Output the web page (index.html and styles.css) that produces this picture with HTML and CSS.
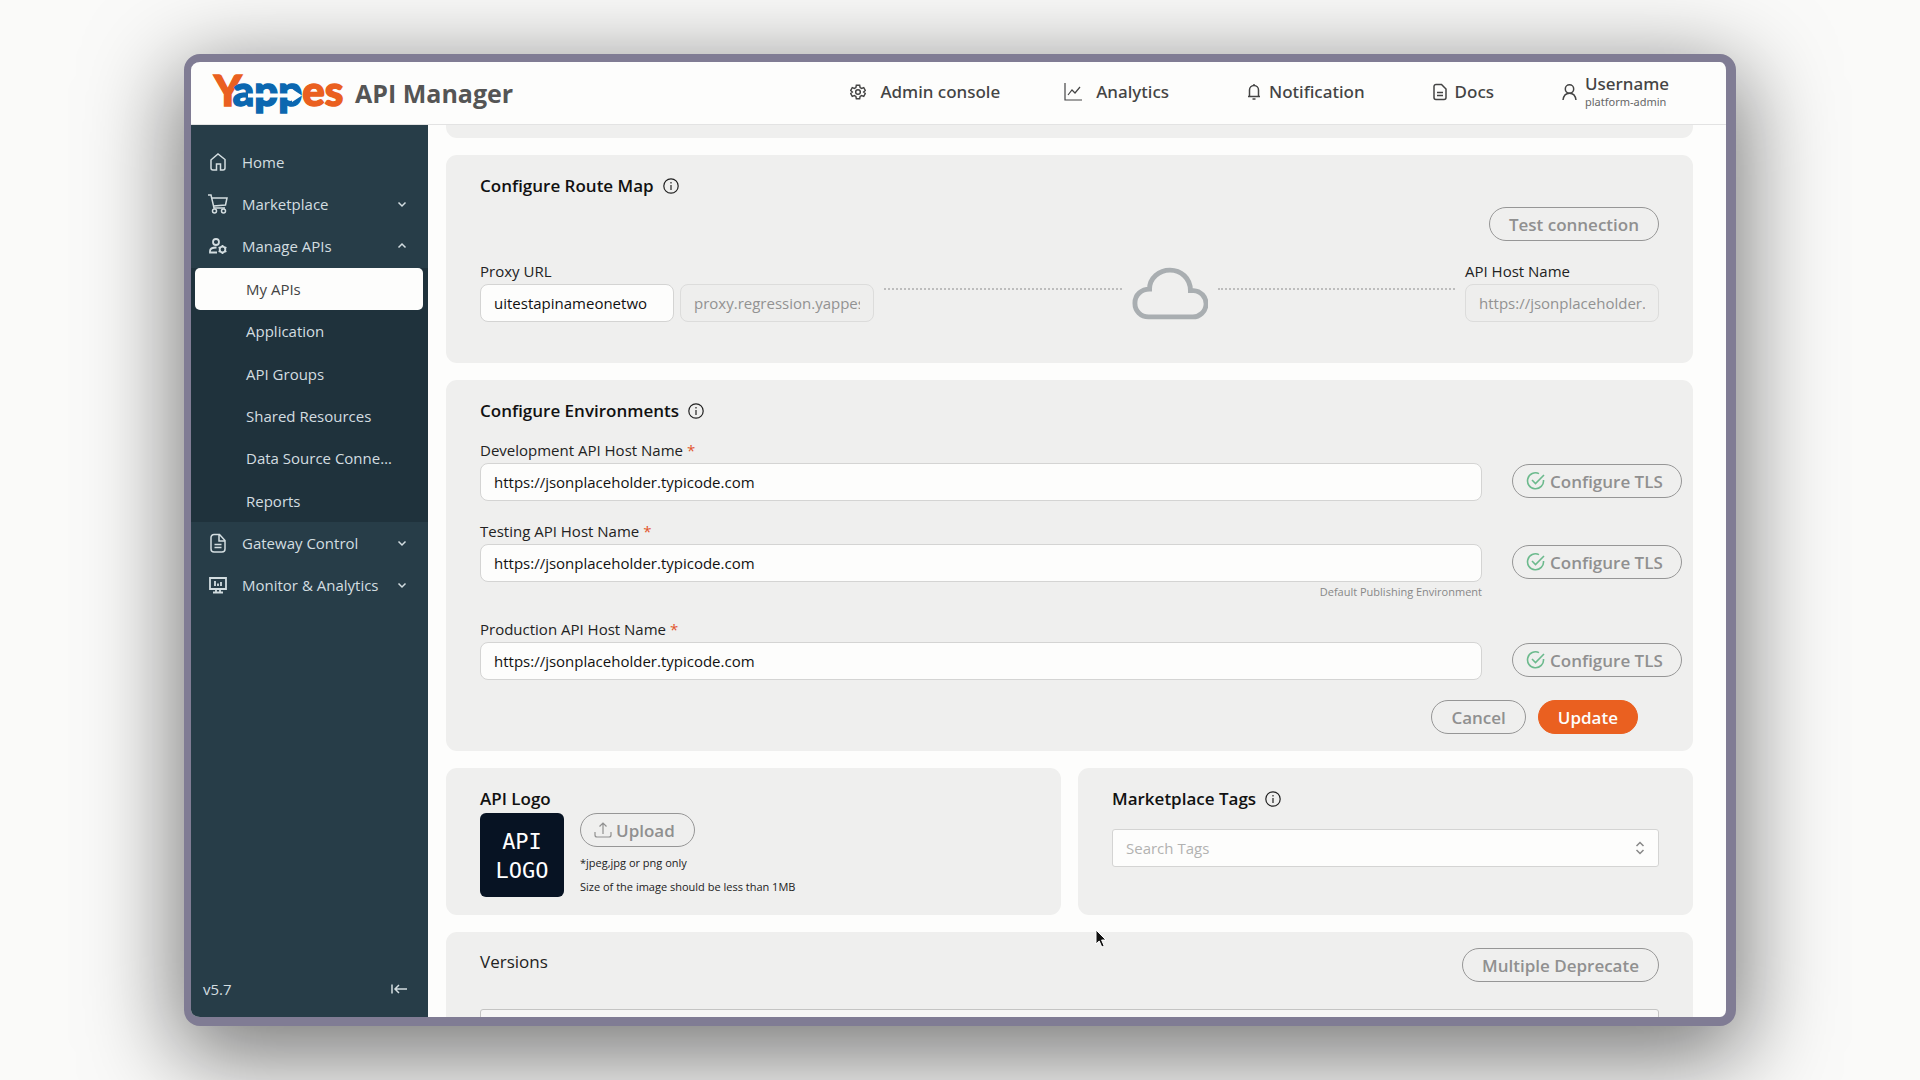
FILE: index.html
```html
<!DOCTYPE html>
<html lang="en">
<head>
    <meta charset="UTF-8">
    <meta name="viewport" content="width=device-width, initial-scale=1.0">
    <title>Yappes API Manager</title>
    <link rel="stylesheet" href="styles.css">
</head>
<body>
    <div class="window">
        <header class="topbar">
            <a class="brand" href="#">
                <svg class="brand-logo" width="136" height="60" viewBox="0 0 136 60" role="img" aria-label="Yappes">
                    <text x="2" y="43"><tspan class="logo-orange">Y</tspan><tspan class="logo-blue" dx="-4">app</tspan><tspan class="logo-orange">es</tspan></text>
                    <path d="M36 30.500h44v-4.500l10 6.500-10 6.500v-4.500H36z" fill="#fdfdfc"/>
                </svg>
                <span class="brand-name">API Manager</span>
            </a>
            <nav class="topnav">
                <a class="topnav-link spaced admin" href="#">
                    <svg width="16" height="16" viewBox="0 0 24 24" class="icon gear"><path d="M9.500 2h5l.7 3.300 2.200 1.300 3.200-1.100 2.400 4.200-2.500 2.300 2.500 2.300-2.400 4.200-3.200-1.100-2.200 1.300-.7 3.300h-5l-.7-3.300-2.200-1.300-3.200 1.100L1 14.300 3.500 12 1 9.700l2.400-4.200 3.200 1.100 2.200-1.300z"/><circle cx="12" cy="12" r="3.500"/></svg>
                    Admin console
                </a>
                <a class="topnav-link spaced" href="#">
                    <svg width="18" height="18" viewBox="0 0 18 18" class="icon thin"><path d="M1 0v17h17M4 12l4-5 3 3 5-6"/></svg>
                    Analytics
                </a>
                <a class="topnav-link bell" href="#">
                    <svg width="14" height="18" viewBox="0 0 14 18" class="icon"><path d="M1 13.500h12M2.500 13.500V7a4.500 4.500 0 0 1 9 0v6.500M5.500 16h3M7 2.500V1"/></svg>
                    Notification
                </a>
                <a class="topnav-link" href="#">
                    <svg width="14" height="18" viewBox="0 0 14 18" class="icon"><path d="M3 1.500h5.500L13 6v8.500a2 2 0 0 1-2 2H3a2 2 0 0 1-2-2v-11a2 2 0 0 1 2-2zM4 9.500h6M4 12.500h6"/></svg>
                    Docs
                </a>
                <a class="topnav-link user" href="#">
                    <svg width="15" height="18" viewBox="0 0 15 18" class="icon"><circle cx="7.500" cy="6" r="4.200"/><path d="M1 17c.5-4 3-6.800 6.500-6.800S13.500 13 14 17"/></svg>
                    <span class="user-text">
                        <span>Username</span>
                        <small>platform-admin</small>
                    </span>
                </a>
            </nav>
        </header>

        <div class="body">
            <aside class="sidebar">
                <nav class="menu">
                    <a class="menu-item" href="#">
                        <svg width="20" height="20" viewBox="0 0 20 20" class="icon"><path d="M3.500 7.500 10 2l7 5.500V16a2 2 0 0 1-2 2h-2.500v-6h-4v6H5a2 2 0 0 1-2-2V8z"/></svg>
                        Home
                    </a>
                    <a class="menu-item" href="#">
                        <svg width="20" height="20" viewBox="0 0 20 20" class="icon"><path d="M0 1h3l3 13h11M4 4h15l-1.500 7L5.500 12"/><circle cx="6.500" cy="17" r="2"/><circle cx="15.500" cy="17" r="2"/></svg>
                        Marketplace
                        <svg width="10" height="10" viewBox="0 0 10 10" class="icon chevron"><path d="m1.500 3.500 3.500 3.500 3.500-3.500"/></svg>
                    </a>
                    <a class="menu-item" href="#">
                        <svg width="20" height="20" viewBox="0 0 20 20" class="icon bold"><circle cx="8" cy="6" r="3"/><path d="M9 16.500H2v-1.500c0-2.200 3-3.500 6.500-3.500"/><circle cx="14.500" cy="13.500" r="2.800"/><path d="M14.500 9v1.700M14.500 16.300V18M10.600 11.200l1.500.9M16.900 14.900l1.500.9M10.600 15.800l1.500-.9M16.900 12.100l1.500-.9"/></svg>
                        Manage APIs
                        <svg width="10" height="10" viewBox="0 0 10 10" class="icon chevron"><path d="M1.500 6.500 5 3l3.500 3.500"/></svg>
                    </a>
                    <div class="submenu">
                        <a class="active" href="#">My APIs</a>
                        <a href="#">Application</a>
                        <a href="#">API Groups</a>
                        <a href="#">Shared Resources</a>
                        <a href="#">Data Source Connections</a>
                        <a href="#">Reports</a>
                    </div>
                    <a class="menu-item" href="#">
                        <svg width="20" height="20" viewBox="0 0 20 20" class="icon"><path d="M6 1.500h5.500l5.500 6V16a3 3 0 0 1-3 3H6a3 3 0 0 1-3-3V4.500a3 3 0 0 1 3-3zM11 1.500V8h6M6.500 11.500h7M6.500 14.500h7"/></svg>
                        Gateway Control
                        <svg width="10" height="10" viewBox="0 0 10 10" class="icon chevron"><path d="m1.500 3.500 3.500 3.500 3.500-3.500"/></svg>
                    </a>
                    <a class="menu-item" href="#">
                        <svg width="20" height="20" viewBox="0 0 20 20" class="icon bold"><path d="M2 3h16v11H2zM5 17.500h10M8 14v3M12 14v3M7 6v5M10 8.500V11M13 7v4"/></svg>
                        Monitor &amp; Analytics
                        <svg width="10" height="10" viewBox="0 0 10 10" class="icon chevron"><path d="m1.500 3.500 3.500 3.500 3.500-3.500"/></svg>
                    </a>
                </nav>
                <div class="sidebar-footer">
                    <span>v5.7</span>
                    <button type="button" class="collapse" aria-label="Collapse menu">
                        <svg width="16" height="12" viewBox="0 0 16 12" class="icon"><path d="M1 1.500v9M16 6H4M8 2 4 6l4 4"/></svg>
                    </button>
                </div>
            </aside>

            <main class="content">
                <section class="card card-tail"></section>

                <section class="card route-map">
                    <h2>Configure Route Map
                        <svg width="16" height="16" viewBox="0 0 16 16" class="info"><circle cx="8" cy="8" r="7.200"/><path d="M8 7v5M8 4v1.500"/></svg>
                    </h2>
                    <div class="test-row">
                        <button type="button" class="btn">Test connection</button>
                    </div>
                    <div class="route">
                        <div class="field proxy">
                            <label for="proxy">Proxy URL</label>
                            <div class="proxy-inputs">
                                <input type="text" id="proxy" value="uitestapinameonetwo">
                                <input type="text" value="proxy.regression.yappes.com" aria-label="Proxy domain" disabled>
                            </div>
                        </div>
                        <div class="dots"></div>
                        <svg width="76" height="53" viewBox="0 0 78 54" class="cloud"><path d="M17 51h45a13.500 13.500 0 0 0 1-27h-3C60 11 50 3 39 3S18 11 18 22.500C10 22.500 3 28 3 37c0 8 6 14 14 14z"/></svg>
                        <div class="dots"></div>
                        <div class="field host">
                            <label for="host">API Host Name</label>
                            <input type="text" id="host" value="https://jsonplaceholder.typicode.com" disabled>
                        </div>
                    </div>
                </section>

                <section class="card environments">
                    <h2>Configure Environments
                        <svg width="16" height="16" viewBox="0 0 16 16" class="info"><circle cx="8" cy="8" r="7.200"/><path d="M8 7v5M8 4v1.500"/></svg>
                    </h2>
                    <div class="env-row">
                        <div class="field">
                            <label for="dev">Development API Host Name <span class="required">*</span></label>
                            <input type="text" id="dev" value="https://jsonplaceholder.typicode.com">
                        </div>
                        <button type="button" class="btn tls">
                            <svg width="20" height="20" viewBox="0 0 20 20" class="check"><path d="M17.500 9A8 8 0 1 1 13 2.600M6 9l3.500 3.500L18 4"/></svg>
                            Configure TLS
                        </button>
                    </div>
                    <div class="env-row">
                        <div class="field">
                            <label for="test">Testing API Host Name <span class="required">*</span></label>
                            <input type="text" id="test" value="https://jsonplaceholder.typicode.com">
                            <small class="hint">Default Publishing Environment</small>
                        </div>
                        <button type="button" class="btn tls">
                            <svg width="20" height="20" viewBox="0 0 20 20" class="check"><path d="M17.500 9A8 8 0 1 1 13 2.600M6 9l3.500 3.500L18 4"/></svg>
                            Configure TLS
                        </button>
                    </div>
                    <div class="env-row">
                        <div class="field">
                            <label for="prod">Production API Host Name <span class="required">*</span></label>
                            <input type="text" id="prod" value="https://jsonplaceholder.typicode.com">
                        </div>
                        <button type="button" class="btn tls">
                            <svg width="20" height="20" viewBox="0 0 20 20" class="check"><path d="M17.500 9A8 8 0 1 1 13 2.600M6 9l3.500 3.500L18 4"/></svg>
                            Configure TLS
                        </button>
                    </div>
                    <div class="actions">
                        <button type="button" class="btn">Cancel</button>
                        <button type="button" class="btn primary">Update</button>
                    </div>
                </section>

                <div class="split">
                    <section class="card">
                        <h2>API Logo</h2>
                        <div class="logo-row">
                            <div class="api-logo">API<br>LOGO</div>
                            <div class="upload">
                                <button type="button" class="btn upload-btn">
                                    <svg width="18" height="16" viewBox="0 0 18 16" class="icon thin"><path d="M1 10v3a2 2 0 0 0 2 2h12a2 2 0 0 0 2-2v-3M9 12V1M5.500 4.500 9 1l3.500 3.500"/></svg>
                                    Upload
                                </button>
                                <small>*jpeg,jpg or png only</small>
                                <small>Size of the image should be less than 1MB</small>
                            </div>
                        </div>
                    </section>
                    <section class="card">
                        <h2>Marketplace Tags
                            <svg width="16" height="16" viewBox="0 0 16 16" class="info"><circle cx="8" cy="8" r="7.200"/><path d="M8 7v5M8 4v1.500"/></svg>
                        </h2>
                        <div class="tags">
                            <input type="text" placeholder="Search Tags" aria-label="Search Tags">
                            <svg width="10" height="14" viewBox="0 0 10 14" class="icon tags-arrow"><path d="M1.500 5 5 1.500 8.500 5M1.500 9 5 12.500 8.500 9"/></svg>
                        </div>
                    </section>
                </div>

                <section class="card versions">
                    <div class="versions-head">
                        <h3>Versions</h3>
                        <button type="button" class="btn">Multiple Deprecate</button>
                    </div>
                    <div class="versions-table"></div>
                </section>
            </main>
        </div>
    </div>

    <svg class="pointer" width="14" height="20" viewBox="0 0 14 20"><path d="M1 1v14l3.200-3 2.600 6 2.400-1-2.600-6H11z"/></svg>
</body>
</html>
```
FILE: styles.css
```css
* {
    box-sizing: border-box;
}

body {
    margin: 0;
    height: 100vh;
    padding: 54px 184px;
    background-color: #fafaf9;
    color: #222;
    font-family: "Open Sans", "Noto Sans", sans-serif;
    font-size: 15px;
    line-height: 20px;
    overflow: hidden;
}

a {
    color: inherit;
    text-decoration: none;
}

h2,
h3 {
    margin: 0;
    font-size: 17px;
    line-height: 24px;
}

h2 {
    display: flex;
    align-items: center;
    gap: 9px;
    color: #111;
    font-weight: 600;
}

h3 {
    font-weight: 400;
    line-height: 28px;
}

small {
    font-size: 11px;
    line-height: 16px;
}

.icon {
    flex-shrink: 0;
    fill: none;
    stroke: currentColor;
    stroke-width: 1.5;
}

.icon.thin {
    stroke-width: 1.2;
}

.icon.bold {
    stroke-width: 1.8;
}

.icon.gear {
    stroke-width: 2.2;
}

.window {
    height: 100%;
    display: flex;
    flex-direction: column;
    border: 8px solid #807c94;
    border-left-width: 7px;
    border-right-width: 10px;
    border-bottom-width: 9px;
    border-radius: 16px;
    background-color: #fdfdfc;
    box-shadow: 0 24px 90px 8px rgba(0, 0, 0, 0.52);
    overflow: hidden;
}

/* Top bar */

.topbar {
    flex: none;
    height: 63px;
    display: flex;
    align-items: center;
    justify-content: space-between;
    padding: 0 57px 0 21px;
    border-bottom: 1px solid #e3e3e3;
}

.brand {
    display: flex;
    align-items: center;
    gap: 7px;
}

.brand-logo text {
    font-family: Lato, sans-serif;
    font-size: 42px;
    font-weight: 900;
    stroke-width: 1.5;
}

.logo-orange {
    fill: #ea6020;
    stroke: #ea6020;
}

.logo-blue {
    fill: #0b67b0;
    stroke: #0b67b0;
}

.brand-name {
    color: #555;
    font-size: 25px;
    font-weight: 700;
    line-height: 32px;
}

.topnav {
    display: flex;
    align-items: center;
    gap: 68px;
    padding-bottom: 3px;
    color: #444;
    font-family: "Noto Sans", sans-serif;
    font-size: 17px;
    font-weight: 500;
}

.topnav-link {
    display: flex;
    align-items: center;
    gap: 8px;
}

.topnav-link.spaced {
    gap: 14px;
}

.topnav-link.admin {
    margin-right: -4px;
}

.topnav-link.bell {
    margin-left: 10px;
}

.user-text {
    display: flex;
    flex-direction: column;
}

.user-text small {
    color: #666;
    font-weight: 400;
}

.body {
    flex: 1;
    min-height: 0;
    display: flex;
}

/* Sidebar */

.sidebar {
    flex: none;
    width: 237px;
    display: flex;
    flex-direction: column;
    justify-content: space-between;
    padding-top: 16px;
    background-color: #273d48;
    color: #d3dde0;
}

.menu-item {
    height: 42px;
    display: flex;
    align-items: center;
    gap: 14px;
    padding: 0 21px 0 17px;
}

.chevron {
    margin-left: auto;
}

.submenu {
    height: 254px;
    display: grid;
    grid-auto-rows: 1fr;
    margin-top: 1px;
    padding: 0 5px 0 4px;
    background-color: #1f323c;
}

.submenu a {
    display: block;
    padding: 0 30px 0 51px;
    border-radius: 5px;
    line-height: 42px;
    white-space: nowrap;
    overflow: hidden;
    text-overflow: ellipsis;
}

.submenu .active {
    background-color: #fdfdfc;
    color: #444;
}

.sidebar-footer {
    display: flex;
    align-items: center;
    justify-content: space-between;
    padding: 0 21px 18px 12px;
}

.collapse {
    display: flex;
    padding: 0;
    border: none;
    background: none;
    color: inherit;
}

/* Content */

.content {
    flex: 1;
    min-width: 0;
    display: flex;
    flex-direction: column;
    gap: 17px;
    padding: 0 33px 0 18px;
    overflow: hidden;
}

.card {
    flex: none;
    padding: 19px 34px 18px;
    border-radius: 11px;
    background-color: #efefee;
}

.card-tail {
    height: 13px;
    padding: 0;
    border-radius: 0 0 11px 11px;
}

.info {
    fill: none;
    stroke: #222;
    stroke-width: 1.2;
}

.field {
    display: flex;
    flex-direction: column;
    gap: 3px;
}

input {
    width: 100%;
    height: 38px;
    padding: 0 13px;
    border: 1px solid #d4d4d3;
    border-radius: 8px;
    background-color: #fdfdfc;
    color: #111;
    font: inherit;
}

input:disabled {
    background-color: #eeeeed;
    border-color: #dcdcdb;
    color: #929292;
}

input::placeholder {
    color: #b2b2b1;
}

.btn {
    height: 34px;
    padding: 0 19px;
    border: 1px solid #969696;
    border-radius: 17px;
    background-color: transparent;
    color: #909090;
    font-family: inherit;
    font-size: 17px;
    font-weight: 600;
    white-space: nowrap;
}

.btn.primary {
    border-color: #ea6020;
    background-color: #ea6020;
    color: #fdfdfc;
}

.route-map {
    padding-bottom: 41px;
}

.test-row {
    display: flex;
    justify-content: flex-end;
    margin: 9px 0 20px;
}

.route {
    display: flex;
    align-items: flex-end;
    gap: 10px;
}

.proxy {
    width: 394px;
}

.proxy-inputs {
    display: flex;
    gap: 6px;
}

.host {
    width: 194px;
}

.dots {
    flex: 1;
    height: 34px;
    border-top: 2px dotted #bdbdbd;
}

.cloud {
    margin-bottom: 2px;
    fill: none;
    stroke: #a9aeb1;
    stroke-width: 5;
}

.environments {
    padding-right: 11px;
    padding-bottom: 17px;
}

.env-row {
    display: grid;
    grid-template-columns: 1fr 170px;
    gap: 30px;
    align-items: start;
    margin: 17px 0 20px;
}

.env-row + .env-row {
    margin-top: 20px;
}

.env-row .btn {
    margin-top: 24px;
}

.required {
    color: #e2552c;
}

.hint {
    color: #888;
    line-height: 14px;
    text-align: right;
}

.tls {
    display: flex;
    align-items: center;
    gap: 4px;
    padding: 0 13px;
}

.check {
    flex-shrink: 0;
    fill: none;
    stroke: #6cba8d;
    stroke-width: 1.6;
}

.actions {
    display: flex;
    justify-content: flex-end;
    gap: 12px;
    margin-right: 44px;
}

.split {
    flex: none;
    display: grid;
    grid-template-columns: 1fr 1fr;
    gap: 17px;
}

.logo-row {
    display: flex;
    gap: 16px;
    margin-top: 2px;
}

.api-logo {
    width: 84px;
    height: 84px;
    padding-top: 14px;
    border-radius: 6px;
    background-color: #071323;
    color: #fff;
    font-family: "DejaVu Sans Mono", monospace;
    font-size: 22px;
    line-height: 29px;
    text-align: center;
}

.upload {
    display: flex;
    flex-direction: column;
    align-items: flex-start;
    gap: 8px;
}

.upload-btn {
    display: flex;
    align-items: center;
    gap: 4px;
    padding: 0 19px 0 13px;
}

.tags {
    position: relative;
    margin-top: 18px;
}

.tags input {
    border-radius: 3px;
}

.tags-arrow {
    position: absolute;
    top: 12px;
    right: 14px;
    color: #888;
}

.versions {
    padding-top: 16px;
}

.versions-head {
    display: flex;
    align-items: flex-start;
    justify-content: space-between;
}

.versions-table {
    height: 60px;
    margin-top: 27px;
    border: 1px solid #c4c4c3;
    border-radius: 3px;
    background-color: #f6f6f5;
}

.pointer {
    position: absolute;
    left: 1095px;
    top: 929px;
    fill: #111;
    stroke: #fff;
    stroke-width: 1;
}
```
